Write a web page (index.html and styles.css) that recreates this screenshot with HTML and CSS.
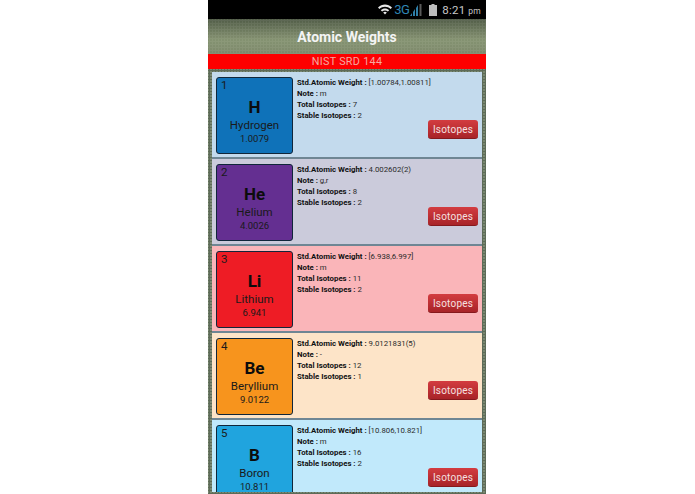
FILE: index.html
```html
<!DOCTYPE html>
<html lang="en">
<head>
<meta charset="utf-8">
<title>Atomic Weights</title>
<link rel="stylesheet" href="styles.css">
</head>
<body>
<main class="phone">
  <header class="status">
    <svg class="wifi" viewBox="0 0 14 11" width="14" height="11"><path d="M0 3.6C4-.6 10-.6 14 3.6l-1.4 1.5C9.400 1.900 4.600 1.900 1.400 5.100z" fill="#e8e8e8"/><path d="M2.800 6.200c2.400-2.300 6-2.300 8.400 0L9.900 7.600C8.200 6 5.800 6 4.100 7.600z" fill="#e8e8e8"/><path d="M5.200 8.500c1.100-.9 2.500-.9 3.600 0L7 10.500z" fill="#e8e8e8"/></svg>
    <span class="net">3G</span>
    <svg class="signal" viewBox="0 0 12 12" width="12" height="12"><path d="M0 12 2 9v3zM3 12V8l2-3v7zM6 12V4l2-3v11z" fill="#2f7fa8"/><path d="M9.500 0h2v12h-2z" fill="#5a5a5a"/></svg>
    <svg class="battery" viewBox="0 0 8 12" width="8" height="12"><path d="M2.500 0h3v1H8v11H0V1h2.500z" fill="#bdbdbd"/></svg>
    <span class="clock">8:21 <small>pm</small></span>
  </header>
  <h1 class="title">Atomic Weights</h1>
  <div class="subtitle">NIST SRD 144</div>
  <section class="list">
    <article class="card card-h">
      <div class="tile tile-h"><span class="num">1</span><b class="sym">H</b><span class="name">Hydrogen</span><span class="mass">1.0079</span></div>
      <div class="info">
        <p><b>Std.Atomic Weight :</b> [1.00784,1.00811]</p>
        <p><b>Note :</b> m</p>
        <p><b>Total Isotopes :</b> 7</p>
        <p><b>Stable Isotopes :</b> 2</p>
        <button class="btn">Isotopes</button>
      </div>
    </article>
    <article class="card card-he">
      <div class="tile tile-he"><span class="num">2</span><b class="sym">He</b><span class="name">Helium</span><span class="mass">4.0026</span></div>
      <div class="info">
        <p><b>Std.Atomic Weight :</b> 4.002602(2)</p>
        <p><b>Note :</b> g,r</p>
        <p><b>Total Isotopes :</b> 8</p>
        <p><b>Stable Isotopes :</b> 2</p>
        <button class="btn">Isotopes</button>
      </div>
    </article>
    <article class="card card-li">
      <div class="tile tile-li"><span class="num">3</span><b class="sym">Li</b><span class="name">Lithium</span><span class="mass">6.941</span></div>
      <div class="info">
        <p><b>Std.Atomic Weight :</b> [6.938,6.997]</p>
        <p><b>Note :</b> m</p>
        <p><b>Total Isotopes :</b> 11</p>
        <p><b>Stable Isotopes :</b> 2</p>
        <button class="btn">Isotopes</button>
      </div>
    </article>
    <article class="card card-be">
      <div class="tile tile-be"><span class="num">4</span><b class="sym">Be</b><span class="name">Beryllium</span><span class="mass">9.0122</span></div>
      <div class="info">
        <p><b>Std.Atomic Weight :</b> 9.0121831(5)</p>
        <p><b>Note :</b> -</p>
        <p><b>Total Isotopes :</b> 12</p>
        <p><b>Stable Isotopes :</b> 1</p>
        <button class="btn">Isotopes</button>
      </div>
    </article>
    <article class="card card-b">
      <div class="tile tile-b"><span class="num">5</span><b class="sym">B</b><span class="name">Boron</span><span class="mass">10.811</span></div>
      <div class="info">
        <p><b>Std.Atomic Weight :</b> [10.806,10.821]</p>
        <p><b>Note :</b> m</p>
        <p><b>Total Isotopes :</b> 16</p>
        <p><b>Stable Isotopes :</b> 2</p>
        <button class="btn">Isotopes</button>
      </div>
    </article>
  </section>
</main>
</body>
</html>
```
FILE: styles.css
```css
* { box-sizing: border-box; }
html, body { margin: 0; height: 100%; background: #fff; overflow: hidden; }
body { font-family: Roboto, "Liberation Sans", sans-serif; }
.phone { width: 278px; height: 494px; margin-left: 208px; display: flex; flex-direction: column; overflow: hidden; background: radial-gradient(circle, #5d6b58 1px, #7f8d76 1.5px) 0 0 / 3px 3px; }
.status { height: 19px; flex: none; background: #000; display: flex; align-items: center; justify-content: flex-end; padding-right: 5px; }
.wifi { margin-right: 2px; }
.net { color: #2f86b4; font-size: 13px; margin-right: 1px; letter-spacing: -.5px; }
.signal { margin-right: 7px; }
.battery { margin-right: 5px; }
.clock { color: #c8c8c8; font-size: 11.500px; letter-spacing: .2px; }
.clock small { font-size: 8.500px; }
.title { height: 35px; flex: none; margin: 0; background: radial-gradient(circle, rgba(255,255,255,.07) 1px, transparent 1.500px) 0 0 / 3px 3px, linear-gradient(#4f5a45, #83916f 60%, #7b8869); color: #f4f4f4; font-size: 14px; font-weight: 700; text-align: center; line-height: 36px; }
.subtitle { height: 15px; flex: none; background: #fe0000; color: #f6a8a0; font-size: 10.800px; text-align: center; line-height: 16px; letter-spacing: .3px; }
.list { flex: 1; min-height: 0; margin: 3px 4px 2px; display: flex; flex-direction: column; overflow: hidden; }
.card { flex: none; height: 87px; display: flex; padding: 5px 4px 3px; border-bottom: 2px solid #6f8694; }
.card-h { background: #c3daed; }
.card-he { background: #cbcbdb; }
.card-li { background: #fab5b9; }
.card-be { background: #fde4c8; }
.card-b { background: #c1e9fb; }
.tile { width: 77px; height: 77px; flex: none; border: 1px solid #10263a; border-radius: 3px; display: flex; flex-direction: column; align-items: center; color: #1a1a1a; position: relative; }
.tile-h { background: #0f72b9; }
.tile-he { background: #642f91; }
.tile-li { background: #ee1c25; }
.tile-be { background: #f7941d; }
.tile-b { background: #20a4de; }
.num { position: absolute; left: 4px; top: 0; font-size: 11.500px; line-height: 14px; }
.sym { font-size: 17px; line-height: 20px; margin-top: 19px; color: #0c0c0c; }
.name { font-size: 11.500px; line-height: 14px; margin-top: 1px; }
.mass { font-size: 9.500px; line-height: 12px; margin-top: 1px; }
.info { flex: 1; min-width: 0; padding-left: 4px; position: relative; font-size: 7.800px; color: #2a2a2a; }
.info p { margin: 0; height: 11px; line-height: 11px; white-space: nowrap; }
.info p b { color: #111; }
.btn { position: absolute; right: 0; top: 43px; width: 50px; height: 19px; padding: 0; border: 0; border-bottom: 1px solid #85191d; border-radius: 3px; background: linear-gradient(#d33c40, #a82428); color: #f6e0e0; font: 10px Roboto, "Liberation Sans", sans-serif; letter-spacing: .2px; }
```
